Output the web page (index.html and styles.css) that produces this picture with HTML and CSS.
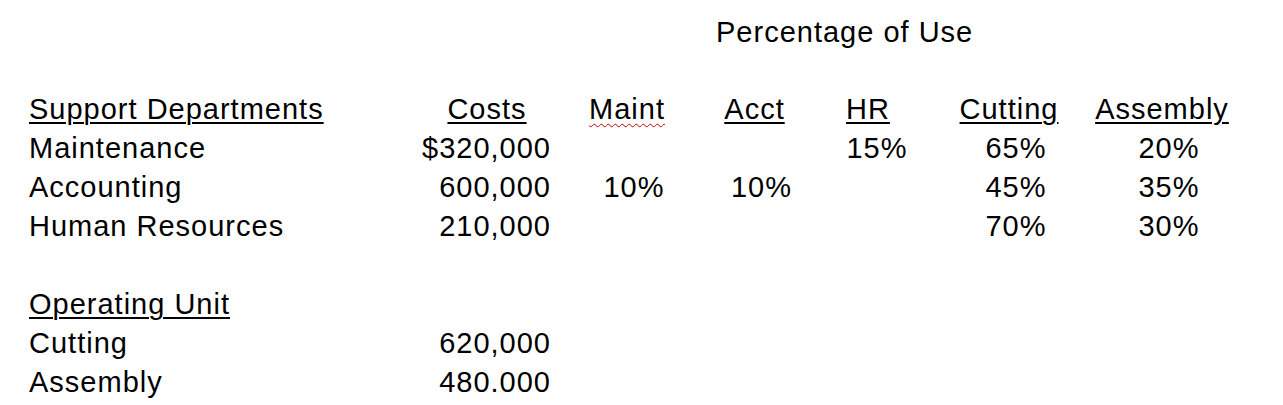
FILE: index.html
```html
<!DOCTYPE html>
<html lang="en">
<head>
<meta charset="utf-8">
<title>Support Department Allocation</title>
<link rel="stylesheet" href="styles.css">
</head>
<body>
<div class="sheet">
  <div class="title">Percentage of Use</div>
  <div class="row"></div>
  <div class="row">
    <div class="lbl"><span class="u">Support Departments</span></div>
    <div class="hdr-cost"><span class="u">Costs</span></div>
    <div class="hdr"><span class="spell">Maint</span></div>
    <div class="hdr"><span class="u">Acct</span></div>
    <div class="hdr hdr-hr"><span class="u">HR</span></div>
    <div class="hdr"><span class="u">Cutting</span></div>
    <div class="hdr"><span class="u">Assembly</span></div>
  </div>
  <div class="row">
    <div class="lbl">Maintenance</div>
    <div class="num">$320,000</div>
    <div class="pct"></div>
    <div class="pct"></div>
    <div class="pct">15%</div>
    <div class="pct">65%</div>
    <div class="pct">20%</div>
  </div>
  <div class="row">
    <div class="lbl">Accounting</div>
    <div class="num">600,000</div>
    <div class="pct">10%</div>
    <div class="pct">10%</div>
    <div class="pct"></div>
    <div class="pct">45%</div>
    <div class="pct">35%</div>
  </div>
  <div class="row">
    <div class="lbl">Human Resources</div>
    <div class="num">210,000</div>
    <div class="pct"></div>
    <div class="pct"></div>
    <div class="pct"></div>
    <div class="pct">70%</div>
    <div class="pct">30%</div>
  </div>
  <div class="row"></div>
  <div class="row">
    <div class="lbl"><span class="u">Operating Unit</span></div>
  </div>
  <div class="row">
    <div class="lbl">Cutting</div>
    <div class="num">620,000</div>
  </div>
  <div class="row">
    <div class="lbl">Assembly</div>
    <div class="num">480.000</div>
  </div>
</div>
</body>
</html>
```

FILE: styles.css
```css
html, body {
  margin: 0;
  padding: 0;
  background: #ffffff;
}

body {
  font-family: "Liberation Sans", Arial, sans-serif;
  font-size: 29px;
  letter-spacing: 1px;
  color: #000000;
}

.sheet {
  padding: 12px 0 0 29px;
}

.title {
  height: 39px;
  line-height: 41px;
  padding-left: 687px;
  white-space: nowrap;
}

.row {
  display: grid;
  grid-template-columns: 371px 160px 148px 107px 124px 154px 152px;
  height: 39px;
  line-height: 39px;
  white-space: nowrap;
}

.lbl {
  text-align: left;
}

.num {
  text-align: right;
  padding-right: 9px;
}

.pct {
  text-align: center;
}

.hdr {
  text-align: center;
  padding-right: 14px;
}

.hdr-hr {
  padding-right: 18px;
}

.hdr-cost {
  text-align: center;
  padding-left: 14px;
}

.u {
  text-decoration: underline;
  text-decoration-thickness: 2px;
  text-underline-offset: 3px;
}

.spell {
  text-decoration: underline wavy #c00000;
  text-decoration-thickness: 1px;
  text-underline-offset: 4px;
}
```
